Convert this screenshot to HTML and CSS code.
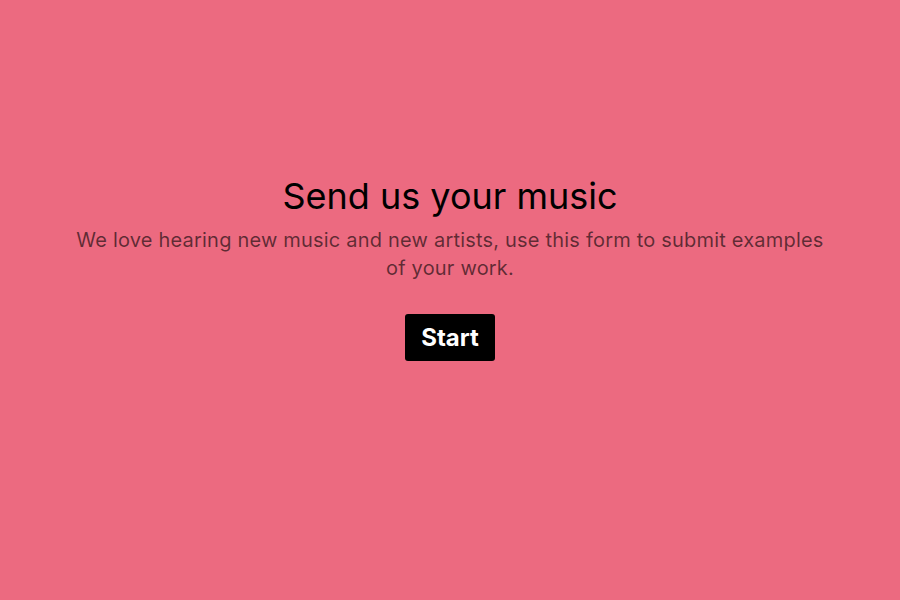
FILE: index.html
```html
<!DOCTYPE html>
<html>
<head>
<meta charset="utf-8">
<link rel="stylesheet" href="styles.css">
</head>
<body>
<main class="page">
  <section class="intro">
    <h1 class="title">Send us your music</h1>
    <p class="lead">We love hearing new music and new artists, use this form to submit examples of your work.</p>
    <button class="start">Start</button>
  </section>
</main>
</body>
</html>
```
FILE: styles.css
```css
html, body {
  margin: 0;
  padding: 0;
  height: 100%;
}
body {
  background: #ec6a80;
  font-family: Inter, "Noto Sans", sans-serif;
}
.page {
  height: 100%;
  box-sizing: border-box;
  padding-bottom: 66px;
  display: flex;
  align-items: center;
  justify-content: center;
}
.intro {
  max-width: 752px;
  display: flex;
  flex-direction: column;
  align-items: center;
  text-align: center;
}
.title {
  margin: 0 0 8px;
  font-size: 36px;
  font-weight: 400;
  line-height: 44px;
  color: #000;
}
.lead {
  margin: 0;
  font-size: 20px;
  line-height: 28px;
  letter-spacing: 0.2px;
  color: rgba(0, 0, 0, 0.6);
}
.start {
  margin-top: 32px;
  background: #000;
  color: #fff;
  border: none;
  border-radius: 3px;
  font-family: inherit;
  font-size: 24px;
  font-weight: 700;
  padding: 8px 16px;
  line-height: 31px;
}
```
